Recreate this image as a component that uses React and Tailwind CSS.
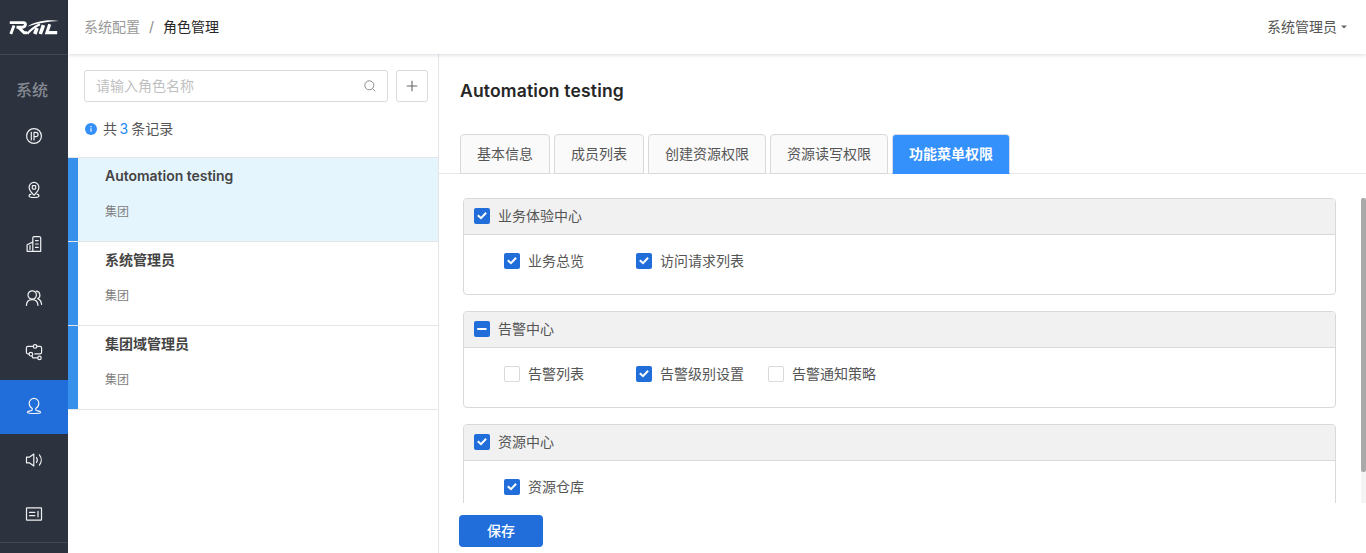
import React from "react";

function NavIcon({ children }) {
  return (
    <svg
      viewBox="0 0 18 18"
      className="h-[18px] w-[18px]"
      fill="none"
      stroke="currentColor"
      strokeWidth="1.2"
      strokeLinecap="round"
      strokeLinejoin="round"
    >
      {children}
    </svg>
  );
}

const navIcons = [
  {
    id: "ip",
    icon: (
      <NavIcon>
        <circle cx="9" cy="9" r="7.4" />
        <path d="M6.3 5.3v7.6M9 12.9V5.4h1.9a2.1 2.1 0 0 1 0 4.3H9" />
      </NavIcon>
    ),
  },
  {
    id: "location",
    icon: (
      <NavIcon>
        <path d="M9 14.2C6.2 11.600 4.100 9.200 4.100 6.300a4.900 4.900 0 0 1 9.800 0c0 2.900-2.100 5.300-4.900 7.900z" />
        <rect x="7.3" y="4.7" width="3.4" height="3.4" rx="0.8" />
        <path d="M6 13.2c-1.200.3-2 .8-2 1.500 0 1.200 2.200 1.800 5 1.800s5-.6 5-1.800c0-.7-.8-1.200-2-1.500" />
      </NavIcon>
    ),
  },
  {
    id: "building",
    icon: (
      <NavIcon>
        <path d="M2.100 16.300V9.700l5.700-2.600V3a1.300 1.300 0 0 1 1.300-1.300h5.300A1.300 1.300 0 0 1 15.700 3v13.300z" />
        <path d="M7.800 7.100v9.200M5 10.600v3.800M10.500 5.600h2.700M10.500 9h2.700M10.500 12.400h2.700" />
      </NavIcon>
    ),
  },
  {
    id: "users",
    icon: (
      <NavIcon>
        <circle cx="7.200" cy="6" r="4.200" />
        <path d="M1.400 16.400c.2-3.500 2.600-5.800 5.800-5.800s5.600 2.300 5.800 5.800" />
        <path d="M11.200 2.200a3.900 3.900 0 0 1 1.500 7.400c2.200.9 3.600 3 3.900 5.800" />
      </NavIcon>
    ),
  },
  {
    id: "topology",
    icon: (
      <NavIcon>
        <path d="M8.200 3.400H3A1.600 1.600 0 0 0 1.400 5v4.300A1.600 1.600 0 0 0 3 10.900h1.100M12 3.400h3A1.600 1.600 0 0 1 16.600 5v4.300a1.600 1.600 0 0 1-1.600 1.600H9.800M6.800 12.900l1.200 2h4.500" />
        <circle cx="10.100" cy="3.400" r="1.800" />
        <circle cx="5.900" cy="11.200" r="1.800" />
        <circle cx="14.500" cy="14.900" r="1.700" />
      </NavIcon>
    ),
  },
  {
    id: "role",
    active: true,
    icon: (
      <NavIcon>
        <path d="M7.300 11.600C5.300 10.400 4.200 8.500 4.200 6.200a4.800 4.800 0 0 1 9.600 0c0 2.300-1.100 4.200-3.100 5.400v.7c0 1 .6 1.400 1.900 1.600 1.900.3 3 .7 3 1.600 0 1.300-13.200 1.300-13.200 0 0-.9 1.100-1.300 3-1.600 1.300-.2 1.900-.6 1.900-1.600z" />
      </NavIcon>
    ),
  },
  {
    id: "sound",
    icon: (
      <NavIcon>
        <path d="M1.500 6.100h3.200l4.100-3v11.800l-4.100-3H1.500zM11.500 6.500c1 1.500 1 3.500 0 5M14.400 3.900c2.400 3 2.400 7.200 0 10.200" />
      </NavIcon>
    ),
  },
  {
    id: "news",
    icon: (
      <NavIcon>
        <rect x="1.500" y="2.800" width="15" height="12.400" rx="0.500" />
        <path d="M4.500 7.400h5.300M4.500 10.700h5.300M13 6.300v5.500" />
      </NavIcon>
    ),
  },
];

const roles = [
  { name: "Automation testing", scope: "集团", selected: true },
  { name: "系统管理员", scope: "集团" },
  { name: "集团域管理员", scope: "集团" },
];

const tabs = ["基本信息", "成员列表", "创建资源权限", "资源读写权限", "功能菜单权限"];

const groups = [
  {
    name: "业务体验中心",
    state: "on",
    items: [
      { name: "业务总览", state: "on" },
      { name: "访问请求列表", state: "on" },
    ],
  },
  {
    name: "告警中心",
    state: "partial",
    items: [
      { name: "告警列表", state: "off" },
      { name: "告警级别设置", state: "on" },
      { name: "告警通知策略", state: "off" },
    ],
  },
  {
    name: "资源中心",
    state: "on",
    items: [{ name: "资源仓库", state: "on" }],
  },
];

function Checkbox({ state }) {
  if (state === "off") {
    return <span className="h-4 w-4 shrink-0 rounded-[2px] border border-[#d9d9d9] bg-white" />;
  }
  return (
    <span className="flex h-4 w-4 shrink-0 items-center justify-center rounded-[2px] bg-[#216edb]">
      <svg viewBox="0 0 16 16" className="h-4 w-4" fill="none" stroke="#fff" strokeWidth="2">
        {state === "on" ? <path d="M3.800 7.200l3.200 3 5.100-5.400" /> : <path d="M3.200 8h9.300" />}
      </svg>
    </span>
  );
}

function Check({ name, state, className = "" }) {
  return (
    <label className={"flex items-center gap-2 whitespace-nowrap " + className}>
      <Checkbox state={state} />
      <span>{name}</span>
    </label>
  );
}

function Sidebar() {
  return (
    <aside className="flex w-[68px] shrink-0 flex-col bg-[#2c333f] text-[#f0f1f2]">
      <div className="flex h-[55px] items-center justify-center border-b border-[#414853]">
        <svg viewBox="0 0 50 16" className="h-4 w-[50px]" fill="none" stroke="#fff">
          <path d="M.8 3.600H14.500c3.200 0 2.300 4.600-1.500 4.600H7.500M5 6.600 1.800 15M9.500 8.400l5.700 5.300h3" strokeWidth="2.900" />
          <path d="M18.300 14.800C22 10.500 26 7.300 31 5.200" strokeWidth="2.200" />
          <path d="M25.800 15l2.300-6M31.300 15l3.200-8.800" strokeWidth="3.600" />
          <path d="M40.700 5.200 37.900 13.600H48.200" strokeWidth="3.100" />
          <path d="M18.500 7.400C26 2.700 37 .2 50 1.900 39 2.300 29 4.200 18.500 7.400z" fill="#fff" stroke="none" />
        </svg>
      </div>
      <div className="flex h-[55px] items-center justify-center pt-3.5 pr-1 text-base font-medium text-[#858a92]">
        系统
      </div>
      <nav className="flex flex-col">
        {navIcons.map((item) => (
          <a
            key={item.id}
            className={"flex h-[54px] items-center justify-center pb-0.5 " + (item.active ? "bg-[#216edb]" : "")}
          >
            {item.icon}
          </a>
        ))}
      </nav>
      <div className="border-t border-[#414853]" />
    </aside>
  );
}

function RolePanel() {
  return (
    <section className="flex w-[371px] shrink-0 flex-col border-r border-[#e4e5e7]">
      <div className="flex gap-2 pt-4 pr-2.5 pl-4">
        <div className="flex h-8 flex-1 items-center justify-between rounded-[3px] border border-[#d9d9d9] pr-[11px] pl-[11px] text-[#bfbfbf]">
          <span>请输入角色名称</span>
          <svg viewBox="0 0 12 12" className="h-3 w-3" fill="none" stroke="#8c8c8c" strokeWidth="1">
            <circle cx="5.300" cy="5.300" r="4.500" />
            <path d="M8.500 8.500 11.300 11.300" />
          </svg>
        </div>
        <button className="flex h-8 w-8 items-center justify-center rounded-[3px] border border-[#d9d9d9]">
          <svg viewBox="0 0 12 12" className="h-3 w-3" stroke="#666" strokeWidth="1.100">
            <path d="M6 .7v10.600M.7 6h10.600" />
          </svg>
        </button>
      </div>
      <div className="flex h-14 items-center border-b border-[#e4e5e7] pb-0.5 pl-[17px]">
        <svg viewBox="0 0 12 12" className="h-3 w-3">
          <circle cx="6" cy="6" r="6" fill="#3490f8" />
          <path d="M6 5.200v3.600M6 3v1.200" stroke="#fff" strokeWidth="1.100" />
        </svg>
        <span className="ml-1.5">共</span>
        <span className="mr-[3px] ml-[2.500px] text-[#2489f5]">3</span>
        <span>条记录</span>
      </div>
      <ul>
        {roles.map((role) => (
          <li
            key={role.name}
            className={"flex h-[84px] border-b border-[#e4e5e7] " + (role.selected ? "bg-[#e4f5fe]" : "")}
          >
            <span className="w-2.5 bg-[#3790ea]" />
            <div className="flex flex-col pt-[7px] pl-[27px]">
              <span className="text-sm leading-[22px] font-semibold tracking-[-0.02px] text-[#444]">{role.name}</span>
              <span className="mt-4 text-xs leading-[18px] text-[#808080]">{role.scope}</span>
            </div>
          </li>
        ))}
      </ul>
    </section>
  );
}

function PermissionGroup({ group }) {
  return (
    <div className="h-[97px] shrink-0 rounded-[4px] border border-[#d9d9d9]">
      <div className="flex h-9 items-start rounded-t-[3px] border-b border-[#d9d9d9] bg-[#f1f1f1] pt-1.5 pl-2.5">
        <Check name={group.name} state={group.state} />
      </div>
      <div className="flex pt-[15px] pl-10">
        {group.items.map((item) => (
          <Check key={item.name} name={item.name} state={item.state} className="w-[132px]" />
        ))}
      </div>
    </div>
  );
}

function Detail() {
  return (
    <main className="flex min-w-0 flex-1 flex-col">
      <h1 className="mt-[23px] pl-[21px] text-[17.5px] leading-7 font-semibold tracking-[0.17px] text-[#262626]">
        Automation testing
      </h1>
      <div className="mt-[29px] flex h-10 shrink-0 gap-1 border-b border-[#e8e8e8] pl-[21px]">
        {tabs.map((tab, i) => (
          <button
            key={tab}
            className={
              "h-10 rounded-t-[4px] border px-4 whitespace-nowrap " +
              (i === tabs.length - 1
                ? "border-[#d3dce8] border-b-[#3490fa] bg-[#3490fa] font-semibold text-white"
                : "border-[#d9d9d9] bg-[#fafafa]")
            }
          >
            {tab}
          </button>
        ))}
      </div>
      <div className="mt-6 flex h-[305px] shrink-0">
        <div className="ml-6 flex flex-1 flex-col gap-4 overflow-hidden">
          {groups.map((g) => (
            <PermissionGroup key={g.name} group={g} />
          ))}
        </div>
        <div className="ml-[25px] w-[5px] bg-[#f4f4f4]">
          <div className="h-[274px] rounded-[2px] bg-[#a9a9a9]" />
        </div>
      </div>
      <div className="pt-3 pl-5">
        <button className="h-8 w-[84px] rounded-[4px] bg-[#216edb] font-medium text-white">保存</button>
      </div>
    </main>
  );
}

export default function App() {
  return (
    <div className="flex h-[553px] w-[1366px] overflow-hidden bg-white font-['Inter','Noto_Sans_CJK_SC',sans-serif] text-sm leading-[22px] text-[#555]">
      <Sidebar />
      <div className="flex min-w-0 flex-1 flex-col">
        <header className="z-10 flex h-[54px] shrink-0 items-center justify-between bg-white pr-[19px] pl-4 shadow-[0_1px_4px_rgba(0,21,41,0.16)]">
          <div className="flex items-center">
            <span className="text-[#999]">系统配置</span>
            <span className="mx-[9px] text-[#888]">/</span>
            <span className="text-[#262626]">角色管理</span>
          </div>
          <div className="flex items-center gap-1">
            <span>系统管理员</span>
            <svg viewBox="0 0 6 4" className="h-1 w-1.5" fill="#666">
              <path d="M0 .5h6L3 3.500z" />
            </svg>
          </div>
        </header>
        <div className="flex min-h-0 flex-1">
          <RolePanel />
          <Detail />
        </div>
      </div>
    </div>
  );
}
